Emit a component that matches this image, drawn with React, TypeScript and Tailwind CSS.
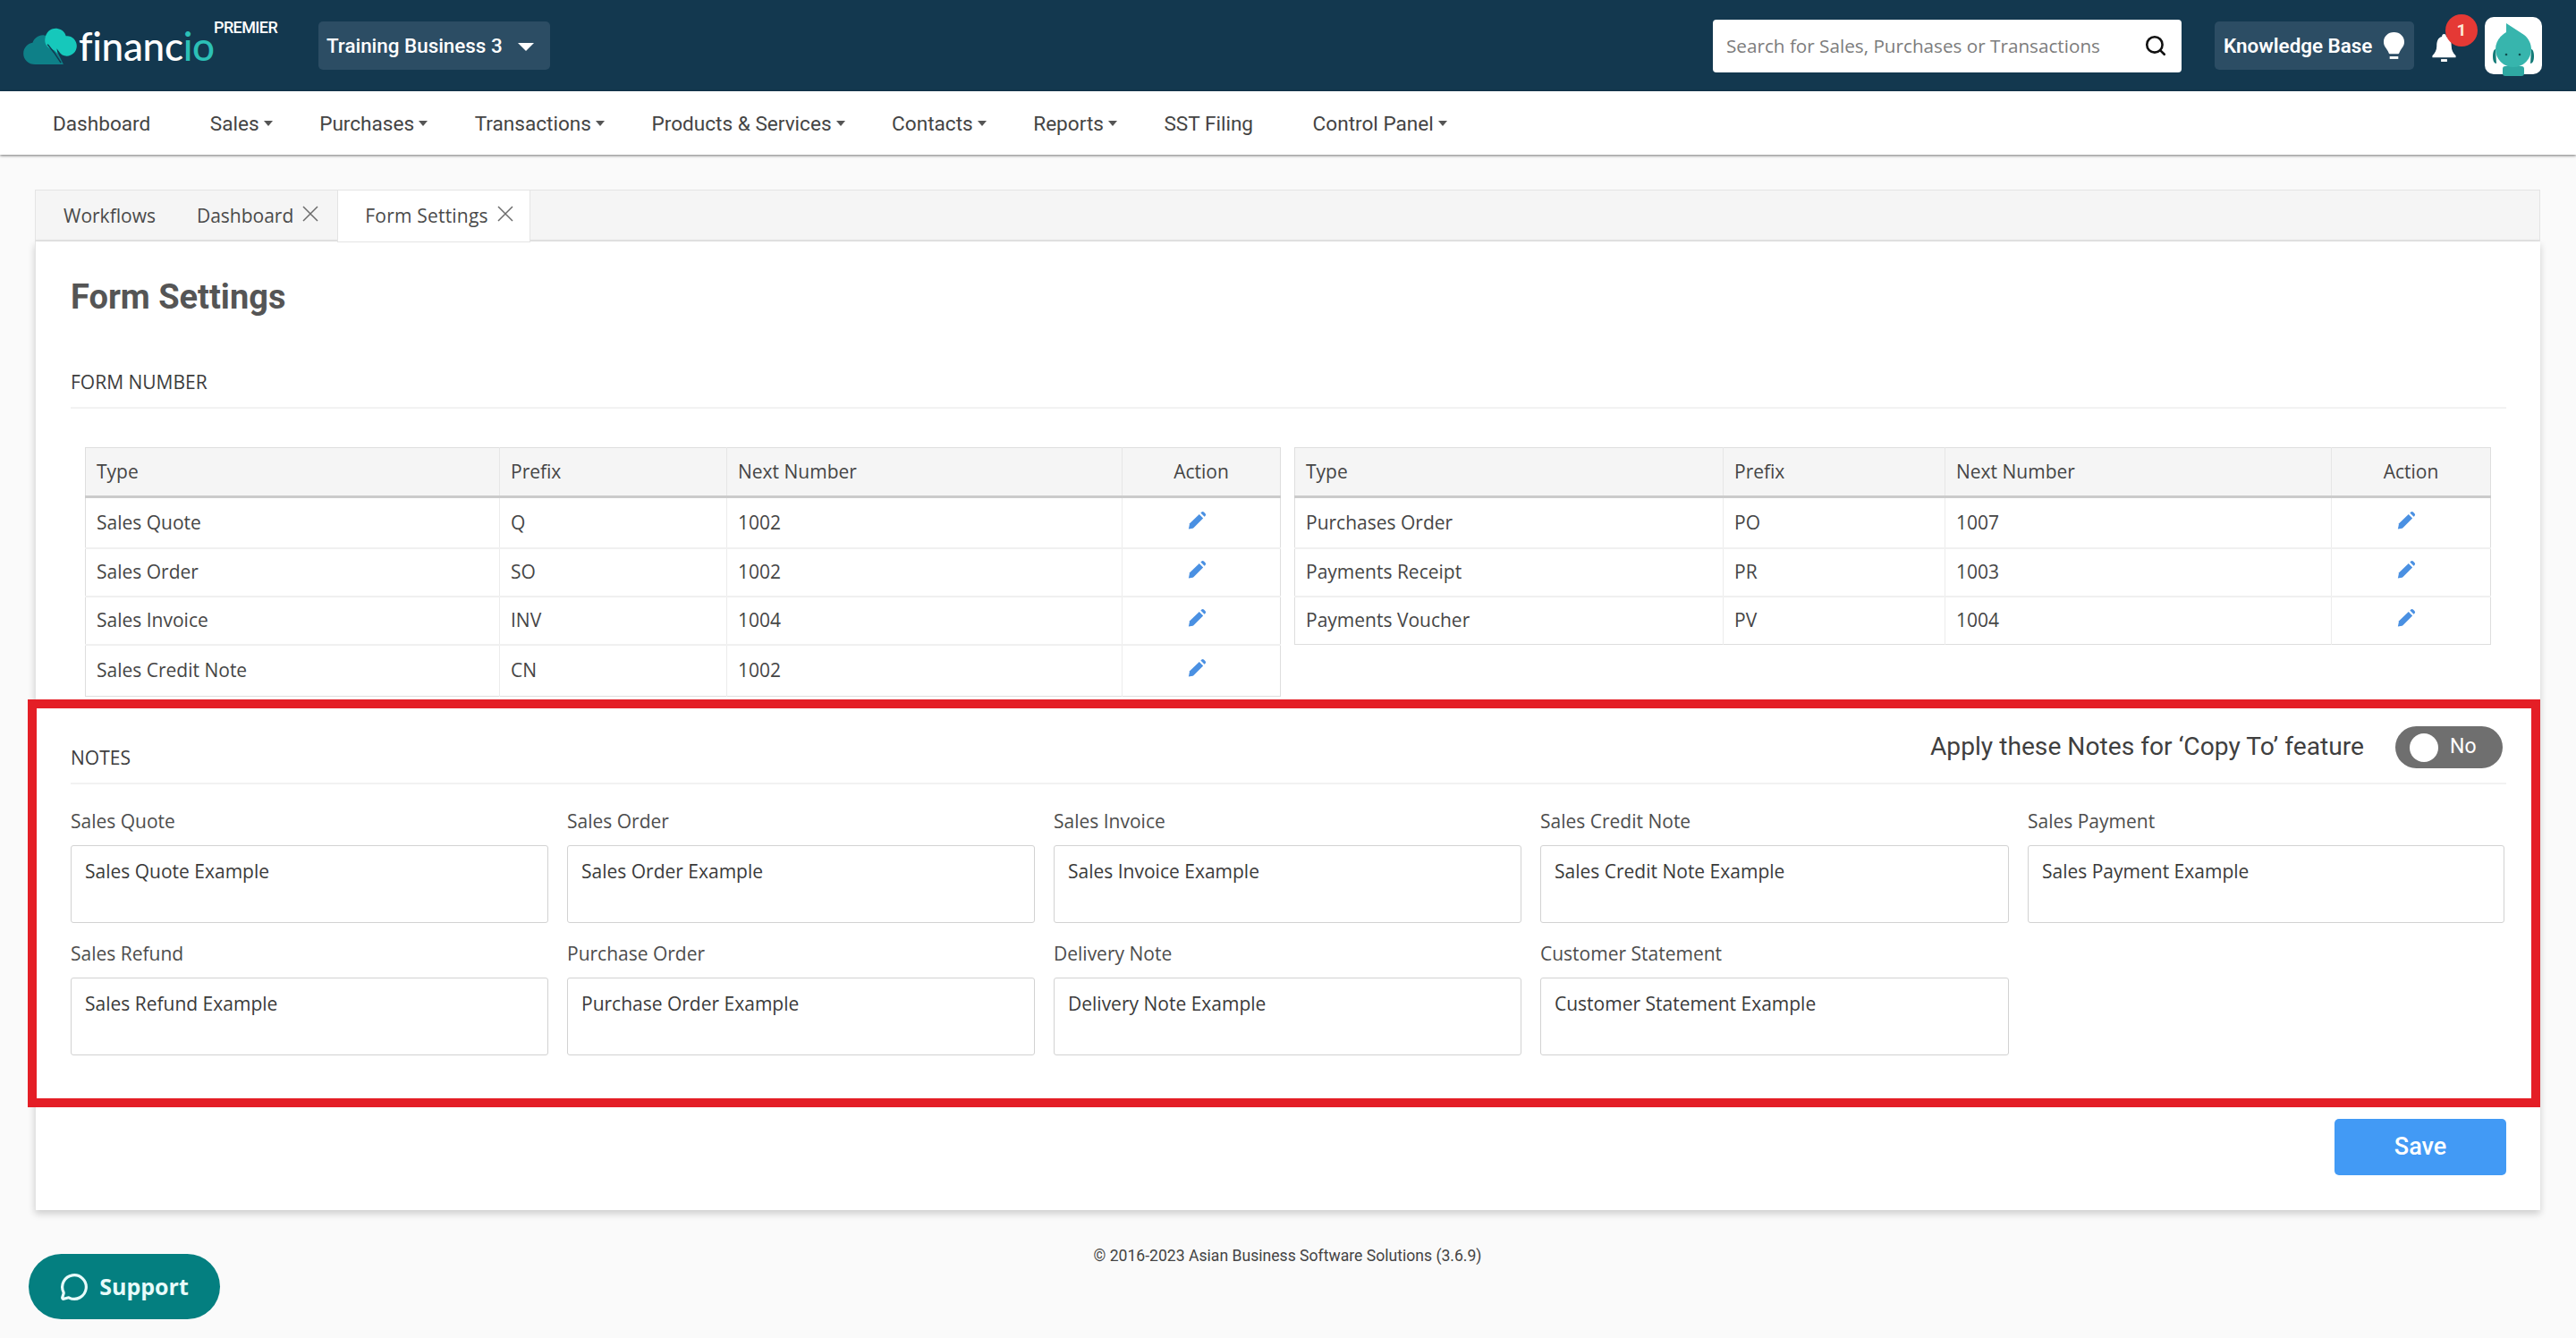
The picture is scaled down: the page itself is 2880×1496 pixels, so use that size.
import { MessageCircle, Search } from "lucide-react";

const NAV = [
  { label: "Dashboard", caret: false },
  { label: "Sales", caret: true },
  { label: "Purchases", caret: true },
  { label: "Transactions", caret: true },
  { label: "Products & Services", caret: true },
  { label: "Contacts", caret: true },
  { label: "Reports", caret: true },
  { label: "SST Filing", caret: false },
  { label: "Control Panel", caret: true },
];

const ROW_HEIGHTS = ["h-[57px]", "h-[54px]", "h-[54px]", "h-[58px]"];

const LEFT_ROWS = [
  ["Sales Quote", "Q", "1002"],
  ["Sales Order", "SO", "1002"],
  ["Sales Invoice", "INV", "1004"],
  ["Sales Credit Note", "CN", "1002"],
];

const RIGHT_ROWS = [
  ["Purchases Order", "PO", "1007"],
  ["Payments Receipt", "PR", "1003"],
  ["Payments Voucher", "PV", "1004"],
];

const NOTES = [
  { label: "Sales Quote", value: "Sales Quote Example" },
  { label: "Sales Order", value: "Sales Order Example" },
  { label: "Sales Invoice", value: "Sales Invoice Example" },
  { label: "Sales Credit Note", value: "Sales Credit Note Example" },
  { label: "Sales Payment", value: "Sales Payment Example" },
  { label: "Sales Refund", value: "Sales Refund Example" },
  { label: "Purchase Order", value: "Purchase Order Example" },
  { label: "Delivery Note", value: "Delivery Note Example" },
  { label: "Customer Statement", value: "Customer Statement Example" },
];

function Caret({ className }: { className: string }) {
  return (
    <span
      className={`inline-block border-x-transparent border-t-current ${className}`}
    />
  );
}

function CloseIcon() {
  return (
    <svg viewBox="0 0 18 18" className="mb-[6px] ml-[10px] size-[18px] text-[#6b6b6b]">
      <path d="M1 1l16 16M17 1L1 17" stroke="currentColor" strokeWidth="1.5" />
    </svg>
  );
}

function Pencil() {
  return (
    <svg viewBox="0 0 24 24" className="mx-auto mb-[6px] size-[21px] text-[#4a90e2]" fill="currentColor">
      <path d="M1 23.5l1.4-7.2L14.6 4.6l5 5L7.6 21.8a3 3 0 0 1-1.4.7z" />
      <path d="M16.4 2.8l.9-.9a2.4 2.4 0 0 1 3.4 0l1.5 1.5a2.4 2.4 0 0 1 0 3.4l-.9.9z" />
    </svg>
  );
}

function FormTable({ rows, widths }: { rows: string[][]; widths: number[] }) {
  return (
    <table className="table-fixed border-collapse border border-[#dedede] text-[21px] text-[#454545]">
      <colgroup>
        {widths.map((w, i) => (
          <col key={i} style={{ width: w }} />
        ))}
      </colgroup>
      <thead>
        <tr className="h-[55px] border-b-[3px] border-[#cbcbcb] bg-[#f5f5f5]">
          <th className="border-r border-[#e6e6e6] px-[12px] text-left font-normal">Type</th>
          <th className="border-r border-[#e6e6e6] px-[12px] text-left font-normal">Prefix</th>
          <th className="border-r border-[#e6e6e6] px-[12px] text-left font-normal">Next Number</th>
          <th className="text-center font-normal">Action</th>
        </tr>
      </thead>
      <tbody>
        {rows.map((row, i) => (
          <tr key={row[0]} className={`${ROW_HEIGHTS[i]} border-b-2 border-[#f0f0f0] last:border-b-0`}>
            <td className="border-r border-[#ececec] px-[12px]">{row[0]}</td>
            <td className="border-r border-[#ececec] px-[12px]">{row[1]}</td>
            <td className="border-r border-[#ececec] px-[12px]">{row[2]}</td>
            <td className="pr-[10px]">
              <Pencil />
            </td>
          </tr>
        ))}
      </tbody>
    </table>
  );
}

function Logo() {
  return (
    <div className="relative ml-[26px] flex h-[42px] w-[290px] items-center">
      <svg viewBox="0 0 64 44" className="h-[41px] w-[60px] shrink-0">
        <path
          d="M14 44C6 44 0 38 0 31c0-7 5-12 11-13 2-6 8-10 14-9 6 1 9 5 11 10l12 25z"
          fill="#0e8088"
        />
        <path
          d="M32 25c-4-2-7-6-6-12C27 5 33 0 41 1c5 1 9 4 10 9 6-1 13 4 13 12 0 7-6 12-12 12-4 0-7-2-9-5l-3-4 1 6-4-4z"
          fill="#16c8bb"
        />
        <path d="M29 20l8 10 8 12" stroke="#13384f" strokeWidth="1.6" fill="none" />
      </svg>
      <span className="ml-[2px] font-['Lato',sans-serif] text-[44px] leading-none font-medium tracking-[-0.3px] text-white">
        financ<span className="text-[#2cc0b6]">io</span>
      </span>
      <span className="absolute top-[-13px] left-[213px] font-['Roboto',sans-serif] text-[18px] font-medium tracking-[-0.6px] text-white">
        PREMIER
      </span>
    </div>
  );
}

function Avatar() {
  return (
    <div className="ml-[32px] size-[64px] rounded-[10px] bg-white">
      <svg viewBox="0 0 64 68" className="h-[68px] w-[64px]">
        <path d="M12 36c-2 0-3 4-3 8s1 8 4 8zM52 36c2 0 3 4 3 8s-1 8-4 8z" fill="#147b78" />
        <rect x="20" y="55" width="24" height="11" rx="3" fill="#2fa8a2" />
        <path d="M24 7L44 20C49 24 52 30 52 36A20 20 0 0 1 12 36C12 28 17 21 24 17Z" fill="#37b5ad" />
        <circle cx="24" cy="42" r="1.3" fill="#0f4f50" />
        <circle cx="39" cy="42" r="1.3" fill="#0f4f50" />
      </svg>
    </div>
  );
}

function TopBar() {
  return (
    <header className="flex h-[102px] items-center bg-[#13384f] font-['Roboto',sans-serif]">
      <Logo />
      <div className="ml-[40px] flex h-[54px] w-[259px] items-center rounded-[5px] bg-[#2c4d64] pt-[2px] pl-[9px] text-[22.4px] font-medium text-white">
        Training Business 3
        <Caret className="ml-[17px] border-x-[9px] border-t-[9px] text-white" />
      </div>
      <div className="ml-auto flex h-[59px] w-[524px] items-center justify-between rounded-[4px] bg-white pr-[16px] pl-[15px] font-['Open_Sans',sans-serif] text-[20.7px] text-[#7c7c7c]">
        <span className="pt-[2px]">Search for Sales, Purchases or Transactions</span>
        <Search className="size-[26px] text-[#111]" strokeWidth={2.4} />
      </div>
      <div className="ml-[37px] flex h-[54px] w-[223px] items-center rounded-[5px] bg-[#2c4d64] pl-[10px] text-[22.4px] font-semibold text-white">
        <span className="pt-[2px]">Knowledge Base</span>
        <svg viewBox="0 0 26 32" className="ml-[12px] h-[31px] w-[25px]" fill="white">
          <path d="M13 0C6 0 1 5 1 11c0 5 3 7 5 11 1 2 1 3 2 3h10c1 0 1-1 2-3 2-4 5-6 5-11 0-6-5-11-12-11z" />
          <rect x="8" y="28" width="10" height="3" />
        </svg>
      </div>
      <div className="relative ml-[20px] h-[36px] w-[27px] self-center">
        <svg viewBox="0 0 27 32" className="mt-[5px] h-[31px] w-[27px]" fill="white">
          <path d="M13.5 0c-1.5 0-2.5 1-2.5 3C6 4 5 9 5 14c0 5-2 8-5 11v2h27v-2c-3-3-5-6-5-11 0-5-1-10-6-11 0-2-1-3-2.5-3z" />
          <rect x="10" y="29" width="7" height="3" />
        </svg>
        <span className="absolute top-[-17px] left-[15px] flex size-[36px] items-center justify-center rounded-full bg-[#e53935] text-[19px] font-bold text-[#fde8d8]">
          1
        </span>
      </div>
      <div className="mr-[38px]">
        <Avatar />
      </div>
    </header>
  );
}

function NavBar() {
  return (
    <nav className="flex h-[71px] items-center gap-[52.5px] bg-white pt-[2px] pl-[59px] font-['Roboto',sans-serif] text-[22.6px] text-[#444] shadow-[0_1px_3px_rgba(0,0,0,0.55)]">
      {NAV.map((item) => (
        <div key={item.label} className={`flex items-center ${item.caret ? "" : "mr-[14px]"}`}>
          {item.label}
          {item.caret && <Caret className="ml-[5px] border-x-[5.5px] border-t-[6px] text-[#555]" />}
        </div>
      ))}
    </nav>
  );
}

function Tabs() {
  return (
    <div className="flex h-[58px] border border-b-2 border-[#e4e4e4] bg-[#f5f5f5] text-[21px] text-[#4a4a4a]">
      <div className="flex items-center pt-[2px] pl-[31px]">Workflows</div>
      <div className="ml-[46px] flex items-center pt-[2px]">
        Dashboard
        <CloseIcon />
      </div>
      <div className="-mb-[2px] ml-[22px] flex w-[214px] items-center bg-white pl-[30px] tracking-[0.2px] outline-1 outline-[#e4e4e4]">
        Form Settings
        <CloseIcon />
      </div>
    </div>
  );
}

function SectionTitle({ children }: { children: string }) {
  return <div className="text-[21px] leading-[24px] text-[#3d3d3d]">{children}</div>;
}

function NotesSection() {
  return (
    <section className="-mr-[38px] -ml-[48px] border-[10px] border-[#e41e26] pt-[20px] pr-[28px] pb-[48px] pl-[38px]">
      <div className="flex items-center justify-between border-b-2 border-[#f2f2f2] pb-[16px]">
        <div className="self-end">
          <SectionTitle>NOTES</SectionTitle>
        </div>
        <div className="flex items-center font-['Roboto',sans-serif] text-[28.2px] text-[#3f3f3f]">
          Apply these Notes for ‘Copy To’ feature
          <div className="mr-[4px] ml-[35px] flex h-[47px] w-[120px] items-center rounded-full bg-[#6f6f6f] pl-[16px] text-[23px] text-white">
            <span className="size-[32px] rounded-full bg-white" />
            <span className="ml-[13px]">No</span>
          </div>
        </div>
      </div>
      <div className="mt-[24px] grid grid-cols-[534px_523px_523px_524px_533px] gap-x-[21px] gap-y-[17px]">
        {NOTES.map((note) => (
          <div key={note.label}>
            <div className="mb-[12px] pt-[2px] text-[21px] leading-[30px] text-[#4d4d4d]">{note.label}</div>
            <div className="h-[87px] rounded-[3px] border border-[#d2d2d2] px-[15px] pt-[13px] text-[21px] leading-[30px] text-[#3a3a3a]">
              {note.value}
            </div>
          </div>
        ))}
      </div>
    </section>
  );
}

export default function App() {
  return (
    <div className="relative h-[1496px] overflow-hidden bg-[#fafafa] font-['Open_Sans',sans-serif]">
      <TopBar />
      <NavBar />
      <main className="mt-[39px] ml-[39px] w-[2801px]">
        <Tabs />
        <div className="border-l border-[#e4e4e4] bg-white pt-[40px] pr-[38px] pb-[39px] pl-[39px] shadow-[0_4px_8px_rgba(0,0,0,0.18)]">
          <h1 className="font-['Roboto',sans-serif] text-[38px] leading-[44px] font-bold text-[#555]">
            Form Settings
          </h1>
          <div className="mt-[61px] border-b-2 border-[#f2f2f2] pb-[16px]">
            <SectionTitle>FORM NUMBER</SectionTitle>
          </div>
          <div className="mt-[43px] ml-[16px] flex items-start gap-[15px]">
            <FormTable rows={LEFT_ROWS} widths={[463, 254, 442, 177]} />
            <FormTable rows={RIGHT_ROWS} widths={[479, 248, 432, 178]} />
          </div>
          <div className="mt-[3px]">
            <NotesSection />
          </div>
          <div className="mt-[13px] flex justify-end">
            <button className="h-[63px] w-[192px] rounded-[5px] bg-[#429af5] font-['Roboto',sans-serif] text-[27px] font-medium text-white">
              Save
            </button>
          </div>
        </div>
        <div className="mt-[38px] text-center font-['Roboto',sans-serif] text-[17.6px] text-[#444]">
          © 2016-2023 Asian Business Software Solutions (3.6.9)
        </div>
      </main>
      <button className="absolute top-[1402px] left-[32px] flex h-[73px] w-[214px] items-center justify-center gap-[12px] rounded-full bg-[#047f80] font-['Open_Sans',sans-serif] text-[25px] font-bold text-[#e8fbfa]">
        <MessageCircle className="size-[32px]" strokeWidth={2.4} />
        Support
      </button>
    </div>
  );
}
